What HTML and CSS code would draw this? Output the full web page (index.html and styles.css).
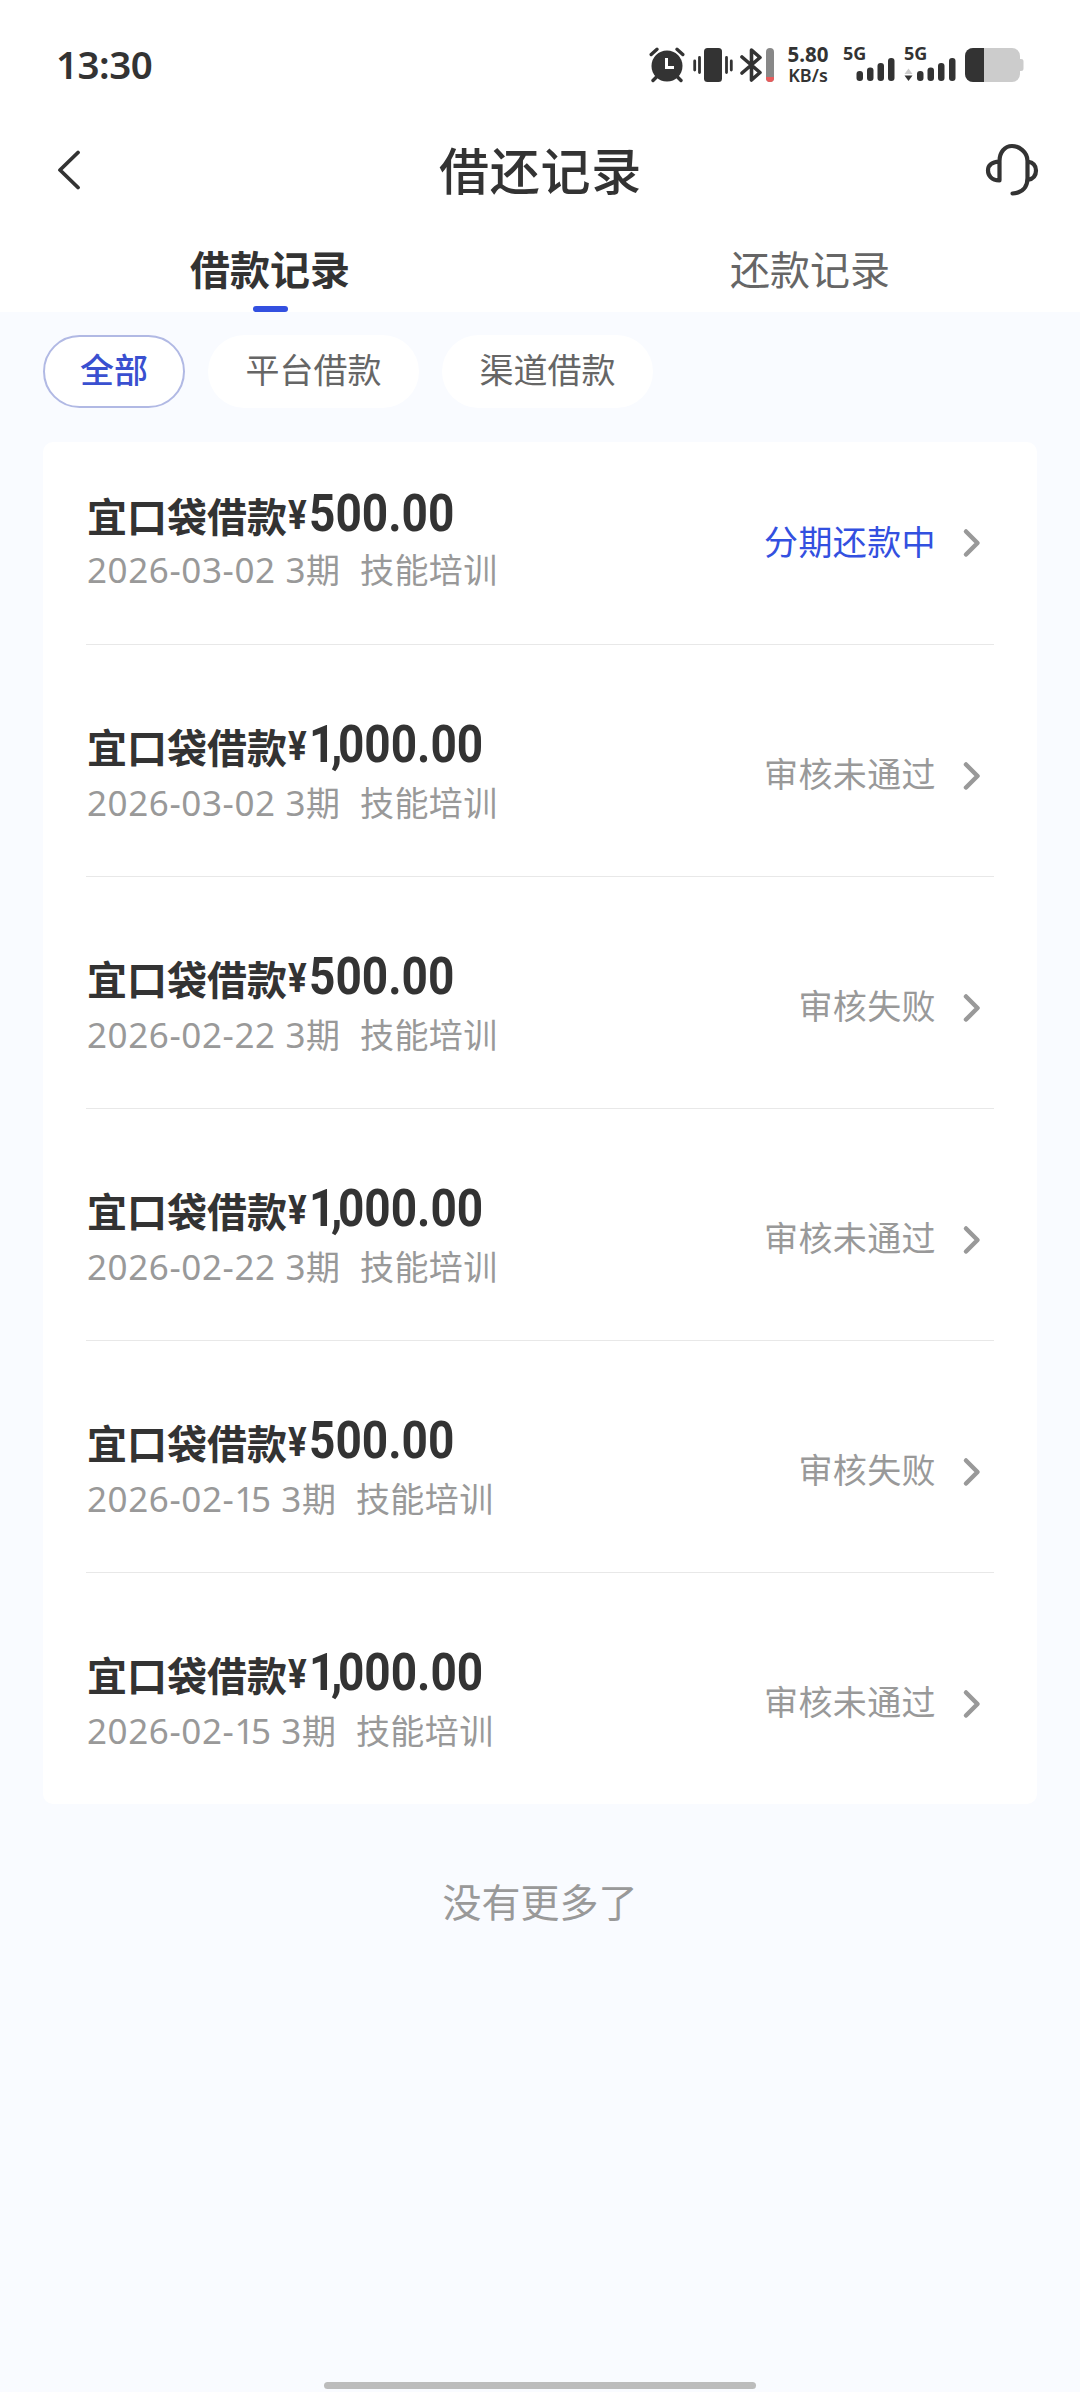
FILE: index.html
```html
<!DOCTYPE html>
<html lang="zh-CN">
<head>
<meta charset="utf-8">
<title>借还记录</title>
<link rel="stylesheet" href="styles.css">
</head>
<body>
<header class="top">
  <div class="statusbar">
    <span class="time">13:30</span>
    <div class="indicators">
      <svg class="alarm" width="36" height="36" viewBox="0 0 36 36"><g fill="none" stroke="#333" stroke-width="3.4" stroke-linecap="round"><path d="M2.2 7.5 8 2.3M33.8 7.5 28 2.3M7.5 30 4 33.5M28.500 30 32 33.500"/></g><circle cx="18" cy="19" r="15.500" fill="#333"/><path d="M17.500 11v9.500H25" fill="none" stroke="#fff" stroke-width="3"/></svg>
      <svg class="vibrate" width="40" height="36" viewBox="0 0 40 36"><rect x="11" y="1" width="18" height="34" rx="3.500" fill="#333"/><path d="M1.700 14v9M6.500 10.500v15M33.500 10.500v15M38.300 14v9" stroke="#333" stroke-width="2.800" stroke-linecap="round"/></svg>
      <svg class="bluetooth" width="34" height="36" viewBox="0 0 34 36"><path d="M2 10 20 25.500 11.500 33V3L20 10.500 2 26" fill="none" stroke="#333" stroke-width="3.600" stroke-linejoin="round" stroke-linecap="round"/><rect x="26" y="1" width="8" height="34" rx="4" fill="#888"/><path d="M26 30h8v1a4 4 0 0 1-8 0z" fill="#e85c5c"/></svg>
      <div class="speed"><span>5.80</span><span>KB/s</span></div>
      <div class="signal">
        <span class="net">5G</span>
        <svg width="40" height="26" viewBox="0 0 40 26"><g fill="#333"><rect x="1.500" y="14" width="6.500" height="10" rx="3"/><rect x="12" y="10.500" width="6.500" height="13.500" rx="3"/><rect x="22.500" y="6" width="6.500" height="18" rx="3"/><rect x="33" y="1" width="6.500" height="23" rx="3"/></g></svg>
      </div>
      <div class="signal second">
        <span class="net">5G</span>
        <svg width="52" height="26" viewBox="0 0 52 26"><path d="M.5 17 4.500 11.500 8.500 17z" fill="#ccc"/><path d="M.5 18.500h8L4.500 24z" fill="#333"/><g fill="#333"><rect x="13" y="14" width="6.500" height="10" rx="3"/><rect x="23.500" y="10.500" width="6.500" height="13.500" rx="3"/><rect x="34" y="6" width="6.500" height="18" rx="3"/><rect x="45" y="1" width="6.500" height="23" rx="3"/></g></svg>
      </div>
      <svg class="battery" width="60" height="36" viewBox="0 0 60 36"><path d="M9 1h39a8 8 0 0 1 8 8v3h1a2.500 2.500 0 0 1 2.500 2.500v7A2.500 2.500 0 0 1 57 24h-1v3a8 8 0 0 1-8 8H9a8 8 0 0 1-8-8V9a8 8 0 0 1 8-8z" fill="#ccc"/><path d="M20 1H9a8 8 0 0 0-8 8v18a8 8 0 0 0 8 8h11z" fill="#333"/></svg>
    </div>
  </div>
  <nav class="navbar">
    <svg class="back" width="24" height="40" viewBox="0 0 24 40"><path d="M21 2.500 3 20 21 37.500" fill="none" stroke="#333" stroke-width="3.800" stroke-linecap="round" stroke-linejoin="round"/></svg>
    <h1 class="title">借还记录</h1>
    <svg class="service" width="54" height="54" viewBox="0 0 54 54"><path d="M14.500 37V18C14.500 9 20 3 27 3s15.500 6 15.500 15v17c0 9-5 15-15 15.500M14.500 18.500C6 19 3 23 3 27.500S6 37.500 14.500 37.500M42.500 18.500c6 1 8.500 4.500 8.500 9s-2.500 8.500-8.500 9.500" fill="none" stroke="#333" stroke-width="4.200" stroke-linecap="round"/></svg>
  </nav>
  <div class="tabs">
    <div class="tab active">借款记录<i class="underline"></i></div>
    <div class="tab">还款记录</div>
  </div>
</header>
<main>
  <div class="chips">
    <span class="chip selected">全部</span>
    <span class="chip">平台借款</span>
    <span class="chip">渠道借款</span>
  </div>
  <section class="card">
    <div class="row">
      <div class="info"><div class="name">宜口袋借款<b class="yen">¥</b><b class="amount">500.00</b></div><div class="meta"><span class="date">2026-03-02 3</span>期<span class="use">技能培训</span></div></div>
      <span class="status live">分期还款中</span>
      <svg class="chevron" width="20" height="30" viewBox="0 0 20 30"><path d="M4 3.500 15.500 15 4 26.500" fill="none" stroke="#999" stroke-width="4.500" stroke-linecap="round" stroke-linejoin="round"/></svg>
    </div>
    <div class="row">
      <div class="info"><div class="name">宜口袋借款<b class="yen">¥</b><b class="amount"><span class="lead">1,</span>000.00</b></div><div class="meta"><span class="date">2026-03-02 3</span>期<span class="use">技能培训</span></div></div>
      <span class="status">审核未通过</span>
      <svg class="chevron" width="20" height="30" viewBox="0 0 20 30"><path d="M4 3.500 15.500 15 4 26.500" fill="none" stroke="#999" stroke-width="4.500" stroke-linecap="round" stroke-linejoin="round"/></svg>
    </div>
    <div class="row">
      <div class="info"><div class="name">宜口袋借款<b class="yen">¥</b><b class="amount">500.00</b></div><div class="meta"><span class="date">2026-02-22 3</span>期<span class="use">技能培训</span></div></div>
      <span class="status">审核失败</span>
      <svg class="chevron" width="20" height="30" viewBox="0 0 20 30"><path d="M4 3.500 15.500 15 4 26.500" fill="none" stroke="#999" stroke-width="4.500" stroke-linecap="round" stroke-linejoin="round"/></svg>
    </div>
    <div class="row">
      <div class="info"><div class="name">宜口袋借款<b class="yen">¥</b><b class="amount"><span class="lead">1,</span>000.00</b></div><div class="meta"><span class="date">2026-02-22 3</span>期<span class="use">技能培训</span></div></div>
      <span class="status">审核未通过</span>
      <svg class="chevron" width="20" height="30" viewBox="0 0 20 30"><path d="M4 3.500 15.500 15 4 26.500" fill="none" stroke="#999" stroke-width="4.500" stroke-linecap="round" stroke-linejoin="round"/></svg>
    </div>
    <div class="row">
      <div class="info"><div class="name">宜口袋借款<b class="yen">¥</b><b class="amount">500.00</b></div><div class="meta"><span class="date">2026-02-<span class="one">1</span>5 3</span>期<span class="use">技能培训</span></div></div>
      <span class="status">审核失败</span>
      <svg class="chevron" width="20" height="30" viewBox="0 0 20 30"><path d="M4 3.500 15.500 15 4 26.500" fill="none" stroke="#999" stroke-width="4.500" stroke-linecap="round" stroke-linejoin="round"/></svg>
    </div>
    <div class="row">
      <div class="info"><div class="name">宜口袋借款<b class="yen">¥</b><b class="amount"><span class="lead">1,</span>000.00</b></div><div class="meta"><span class="date">2026-02-<span class="one">1</span>5 3</span>期<span class="use">技能培训</span></div></div>
      <span class="status">审核未通过</span>
      <svg class="chevron" width="20" height="30" viewBox="0 0 20 30"><path d="M4 3.500 15.500 15 4 26.500" fill="none" stroke="#999" stroke-width="4.500" stroke-linecap="round" stroke-linejoin="round"/></svg>
    </div>
  </section>
  <p class="end">没有更多了</p>
</main>
<div class="home"></div>
</body>
</html>
```
FILE: styles.css
```css
* { box-sizing: border-box; }
body {
  margin: 0;
  height: 2392px;
  display: flex;
  flex-direction: column;
  background: #f9fbff;
  color: #333;
  font-family: "Noto Sans CJK SC", sans-serif;
}
svg { display: block; flex: none; }
.top { height: 312px; background: #fff; }

.statusbar {
  height: 130px;
  padding: 0 56px 0 56px;
  display: flex;
  justify-content: space-between;
  align-items: center;
  font-family: "Noto Sans", sans-serif;
}
.time { font-size: 38.5px; font-weight: 600; line-height: 58px; padding-bottom: 2px; letter-spacing: -.5px; }
.indicators { display: flex; align-items: center; height: 36px; }
.vibrate { margin-left: 8px; }
.bluetooth { margin-left: 7px; }
.speed {
  width: 46px;
  margin-left: 11px;
  display: flex;
  flex-direction: column;
  align-items: center;
  font-size: 20.5px;
  font-weight: 700;
  line-height: 21px;
}
.speed span:last-child { font-size: 18px; font-weight: 600; }
.signal {
  margin-left: 12px;
  width: 52px;
  height: 36px;
  display: flex;
  flex-direction: column;
  align-items: flex-end;
}
.second { margin-left: 9px; }
.net {
  align-self: flex-start;
  height: 10px;
  line-height: 13px;
  font-size: 18px;
  font-weight: 700;
}
.battery { margin-left: 8px; }

.navbar {
  height: 80px;
  padding: 0 41px 0 57px;
  display: flex;
  justify-content: space-between;
  align-items: center;
}
.title { margin: 0 0 5px 15px; font-size: 50px; line-height: 72px; font-weight: 500; letter-spacing: .7px; }

.tabs { display: flex; height: 102px; }
.tab {
  flex: 1;
  display: flex;
  flex-direction: column;
  align-items: center;
  justify-content: space-between;
  padding-top: 28px;
  font-size: 40px;
  line-height: 60px;
  color: #666;
}
.active { font-weight: 700; color: #333; }
.underline { width: 35px; height: 6px; border-radius: 3px; background: #3350e0; }

.chips { display: flex; gap: 23px; padding: 23px 43px 0; }
.chip {
  width: 211px;
  height: 73px;
  border-radius: 37px;
  background: #fff;
  color: #666;
  font-size: 34px;
  line-height: 68px;
  text-align: center;
}
.selected {
  width: 142px;
  border: 2px solid #b1b9e4;
  color: #3a50d0;
  font-weight: 500;
  line-height: 64px;
}

.card {
  margin: 34px 43px 0;
  padding: 0 43px;
  background: #fff;
  border-radius: 10px;
}
.row {
  height: 232px;
  padding-top: 30px;
  border-bottom: 1px solid #e8e8e8;
  display: flex;
  align-items: center;
}
.row:first-child { height: 203px; padding-top: 0; }
.row:last-child { height: 231px; border-bottom: 0; }
.info { flex: 1; padding: 0 0 4px 1px; }
.name {
  display: flex;
  align-items: baseline;
  height: 61px;
  margin-top: -5px;
  font-size: 40px;
  line-height: 60px;
  font-weight: 700;
}
.row:first-child .name { height: 59px; margin-top: -3px; }
.yen { width: 22px; font: 700 40px/50px Roboto, sans-serif; transform: translateX(1px) scaleX(.87) translateY(-3px); transform-origin: left; }
.amount {
  font: 700 52px/50px Roboto, sans-serif;
  transform: scaleX(.885) translateY(-1px);
  transform-origin: left;
}
.row:first-child .amount { transform: scaleX(.885) translateY(-1px); }
.lead { letter-spacing: -5px; }
.meta {
  display: flex;
  height: 50px;
  align-items: baseline;
  font-size: 34px;
  line-height: 50px;
  color: #999;
}
.date { font: 400 35px/50px "Noto Sans", sans-serif; letter-spacing: .6px; white-space: pre; }
.one { letter-spacing: -3.5px; }
.use { margin-left: 20px; letter-spacing: .4px; }
.status { font-size: 34px; line-height: 50px; letter-spacing: .4px; color: #999; padding-bottom: 5px; }
.live { color: #3350e0; }
.chevron { margin: 0 12px 0 26px; }

.end {
  margin: 66px 0 0;
  text-align: center;
  font-size: 39px;
  line-height: 60px;
  color: #999;
}
.home {
  width: 432px;
  height: 7px;
  margin: auto auto 3px;
  border-radius: 4px;
  background: #bcbcbc;
}
```
